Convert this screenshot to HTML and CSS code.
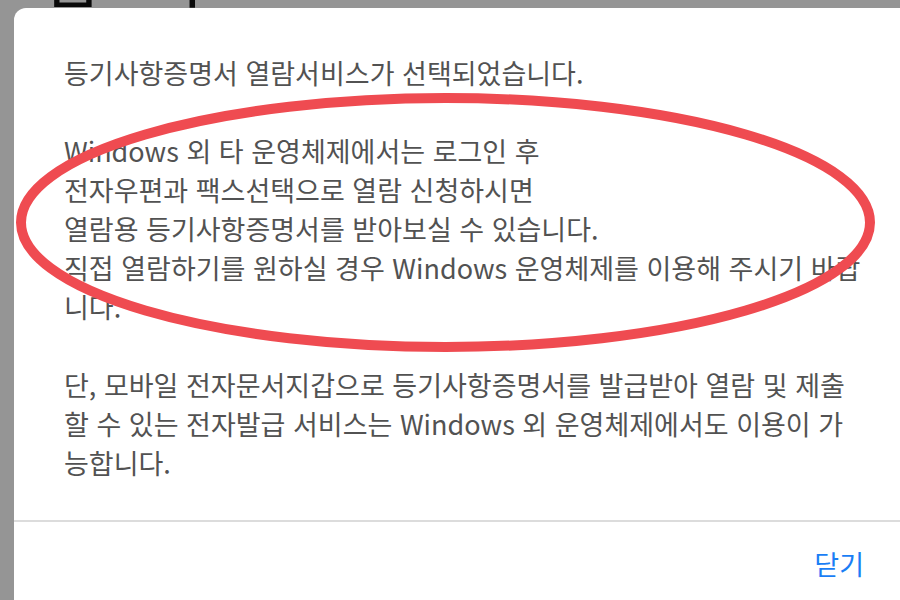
FILE: index.html
```html
<!DOCTYPE html>
<html lang="ko">
<head>
<meta charset="utf-8">
<title>등기사항증명서 열람</title>
<link rel="stylesheet" href="styles.css">
</head>
<body>
<div class="page">
  <h1 class="page-title">담기</h1>
</div>
<div class="overlay">
  <div class="dialog" role="dialog">
    <div class="dialog-body">
      <p>등기사항증명서 열람서비스가 선택되었습니다.</p>
      <p>Windows 외 타 운영체제에서는 로그인 후<br>전자우편과 팩스선택으로 열람 신청하시면<br>열람용 등기사항증명서를 받아보실 수 있습니다.<br>직접 열람하기를 원하실 경우 Windows 운영체제를 이용해 주시기 바랍<br>니다.</p>
      <p>단, 모바일 전자문서지갑으로 등기사항증명서를 발급받아 열람 및 제출<br>할 수 있는 전자발급 서비스는 Windows 외 운영체제에서도 이용이 가<br>능합니다.</p>
    </div>
    <div class="dialog-footer">
      <button class="btn-close" type="button">닫기</button>
    </div>
  </div>
</div>
<svg class="annotation" viewBox="0 0 900 600" width="900" height="600" aria-hidden="true">
  <ellipse cx="445.5" cy="222.5" rx="424.5" ry="124.5" fill="none" stroke="#ef4b51" stroke-width="10"/>
</svg>
</body>
</html>
```
FILE: styles.css
```css
html, body {
  margin: 0;
  padding: 0;
  width: 900px;
  height: 600px;
  overflow: hidden;
}
body {
  background: #ffffff;
  font-family: "Noto Sans CJK KR", "Noto Sans", sans-serif;
}
.page {
  padding-left: 42px;
}
.page-title {
  margin: -62px 0 0 0;
  font-size: 66px;
  font-weight: 400;
  color: #111;
  letter-spacing: 40px;
  line-height: 70px;
}
.overlay {
  position: fixed;
  inset: 0;
  background: rgba(0, 0, 0, 0.415);
  padding: 8px 0 0 14px;
}
.dialog {
  width: 910px;
  height: 620px;
  background: #ffffff;
  border-radius: 12px;
  display: flex;
  flex-direction: column;
}
.dialog-body {
  padding: 45px 0 38px 50px;
  color: #525252;
  font-size: 27px;
  line-height: 39px;
  border-bottom: 2px solid #dcdcdc;
  white-space: nowrap;
}
.dialog-body p {
  margin: 0 0 39px 0;
}
.dialog-body p:last-child {
  margin-bottom: 0;
}
.dialog-footer {
  display: flex;
  justify-content: flex-end;
  padding: 22px 60px 0 0;
}
.btn-close {
  border: 0;
  background: transparent;
  padding: 0;
  font-family: "Noto Sans CJK KR", "Noto Sans", sans-serif;
  font-size: 27px;
  line-height: 40px;
  color: #1a7ef5;
}
.annotation {
  position: fixed;
  left: 0;
  top: 0;
  pointer-events: none;
}
```
